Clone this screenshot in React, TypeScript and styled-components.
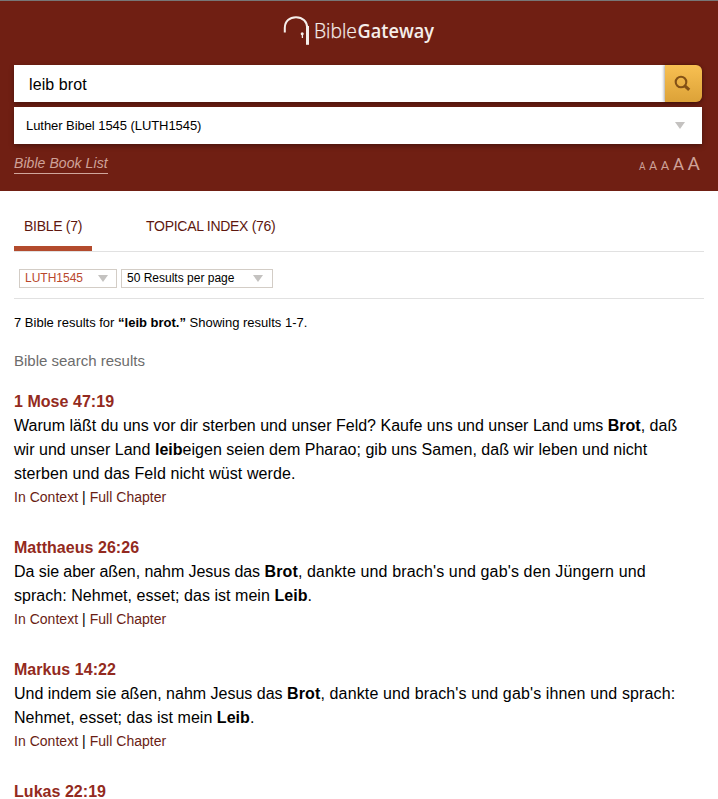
import React from "react";
import styled, { createGlobalStyle } from "styled-components";

const GlobalStyle = createGlobalStyle`
  * { box-sizing: border-box; }
  body {
    margin: 0;
    height: 799px;
    overflow: hidden;
    background: #fff;
    color: #000;
    font-family: "Liberation Sans", Arial, sans-serif;
  }
`;

const Header = styled.header`
  height: 191px;
  padding: 14px 16px 0 14px;
  border-top: 1px solid #777;
  background: #701f13;
`;

const Logo = styled.svg`
  display: block;
  width: 154px;
  height: 32px;
  margin: 0 auto 18px 269px;
  overflow: visible;
`;

const SearchBar = styled.form`
  display: flex;
  height: 37px;
  margin: 0 0 5px;
  box-shadow: 0 2px 5px rgba(0, 0, 0, 0.35);
  border-radius: 0 6px 6px 0;
`;

const SearchField = styled.div`
  flex: 1;
  padding: 1px 0 0 15px;
  background: #fff;
  font-size: 16px;
  letter-spacing: 0.1px;
  line-height: 37px;
`;

const SearchButton = styled.button`
  display: flex;
  align-items: center;
  justify-content: center;
  width: 37px;
  padding: 0 2px 1px 0;
  border: 0;
  border-radius: 0 6px 6px 0;
  background: linear-gradient(#f8c052, #dca238);
  box-shadow: -1px 0 3px rgba(0, 0, 0, 0.35);
`;

const VersionSelect = styled.div`
  display: flex;
  align-items: center;
  justify-content: space-between;
  height: 37px;
  padding: 0 17px 0 12px;
  background: #fff;
  box-shadow: 0 2px 5px rgba(0, 0, 0, 0.35);
  font-size: 13px;
  letter-spacing: -0.06px;
`;

const Arrow = styled.span`
  width: 0;
  height: 0;
  border: 5.5px solid transparent;
  border-top: 7px solid #c4c2c0;
  border-bottom: 0;
`;

const HeaderTools = styled.div`
  display: flex;
  justify-content: space-between;
  align-items: flex-start;
  padding: 10px 2px 0 0;
  color: #cfa299;
`;

const BookList = styled.a`
  height: 20px;
  border-bottom: 1px solid #d0a69c;
  font-size: 14px;
  font-style: italic;
  letter-spacing: 0.07px;
  line-height: 19px;
`;

const FontSizes = styled.div`
  display: flex;
  align-items: baseline;
  gap: 3.6px;
  font-family: Roboto, sans-serif;
  line-height: 20px;
`;

const SizeLetter = styled.span<{ $size: number }>`
  font-size: ${(p) => p.$size}px;
`;

const Content = styled.main`
  padding: 0 14px;
`;

const Tabs = styled.nav`
  display: flex;
  gap: 44px;
  height: 61px;
  padding-top: 15px;
  border-bottom: 1px solid #e1e1e1;
`;

const Tab = styled.a<{ $active?: boolean }>`
  height: 45px;
  padding: 0 10px;
  border-bottom: 5px solid ${(p) => (p.$active ? "#b34b2d" : "transparent")};
  color: #5e170e;
  font-size: 14px;
  letter-spacing: -0.29px;
  line-height: 40px;
  white-space: nowrap;
`;

const Filters = styled.div`
  display: flex;
  gap: 4px;
  height: 47px;
  padding: 17px 5px 0;
  border-bottom: 1px solid #e1e1e1;
`;

const Filter = styled.div<{ $width: number; $accent?: boolean }>`
  display: flex;
  align-items: center;
  justify-content: space-between;
  width: ${(p) => p.$width}px;
  height: 19px;
  padding: 0 ${(p) => (p.$accent ? 8.5 : 9.5)}px 0 5px;
  border: 1px solid #d3cdc6;
  color: ${(p) => (p.$accent ? "#b9472c" : "#000")};
  font-size: 12px;
  line-height: 17px;
`;

const Summary = styled.p`
  margin: 14px 0 0;
  font-size: 13px;
  line-height: 20px;
`;

const Heading = styled.h2`
  margin: 18px 0 19px;
  color: #6c6c6c;
  font-size: 15px;
  font-weight: 400;
  line-height: 20px;
`;

const Result = styled.article`
  margin-bottom: 26px;
`;

const Reference = styled.h3`
  margin: 0;
  color: #932a20;
  font-size: 16px;
  letter-spacing: 0.04px;
  line-height: 24px;
`;

const Verse = styled.p`
  margin: 0;
  font-size: 16px;
  line-height: 24px;
  white-space: nowrap;
`;

const VerseLine = styled.span<{ $spacing: number }>`
  display: block;
  letter-spacing: ${(p) => p.$spacing}px;
`;

const Tracked = styled.span<{ $spacing: number }>`
  letter-spacing: ${(p) => p.$spacing}px;
`;

const Links = styled.div`
  padding-bottom: 2px;
  font-size: 14px;
  letter-spacing: 0.03px;
  line-height: 22px;
`;

const ResultLink = styled.a`
  color: #6a1d14;
`;

type Line = { text: React.ReactNode; spacing: number };
type ResultData = { reference: string; lines: Line[] };

const results: ResultData[] = [
  {
    reference: "1 Mose 47:19",
    lines: [
      { spacing: 0.014, text: <>Warum läßt du uns vor dir sterben und unser Feld? Kaufe uns und unser Land ums <b>Brot</b>, daß</> },
      { spacing: 0.02, text: <>wir und unser Land <b>leib</b>eigen seien dem Pharao; gib uns Samen, daß wir leben und nicht</> },
      { spacing: 0.08, text: <>sterben und das Feld nicht wüst werde.</> },
    ],
  },
  {
    reference: "Matthaeus 26:26",
    lines: [
      { spacing: -0.065, text: <>Da sie aber aßen, nahm Jesus das <Tracked $spacing={0.14}><b>Brot</b>, dankte und brach's und gab's den Jüngern und</Tracked></> },
      { spacing: 0.045, text: <>sprach: Nehmet, esset; das ist mein <b>Leib</b>.</> },
    ],
  },
  {
    reference: "Markus 14:22",
    lines: [
      { spacing: 0, text: <>Und indem sie aßen, nahm Jesus das <Tracked $spacing={0.13}><b>Brot</b>, dankte und brach's und gab's ihnen und sprach:</Tracked></> },
      { spacing: 0.035, text: <>Nehmet, esset; das ist mein <b>Leib</b>.</> },
    ],
  },
  { reference: "Lukas 22:19", lines: [] },
];

export default function App() {
  return (
    <>
      <GlobalStyle />
      <Header>
        <Logo viewBox="0 0 154 32" aria-label="BibleGateway">
          <path d="M1.800 17.500V13C1.800 6 6.700 2.200 13 2.200c6.700 0 11.300 4.500 11.300 11" fill="none" stroke="#f5eeea" strokeWidth="2" />
          <path d="M24.500 11V29.800" stroke="#f5eeea" strokeWidth="3" />
          <circle cx="19.200" cy="18.800" r="1.500" fill="#f5eeea" />
          <path d="M19.400 19v4" stroke="#f5eeea" strokeWidth="1.300" />
          <text x="31" y="23.300" fill="#f5eeea" stroke="#f5eeea" strokeWidth="0.250" fontFamily="Open Sans, sans-serif" fontSize="19.500" fontWeight="300" textLength="43" lengthAdjust="spacingAndGlyphs">Bible</text>
          <text x="74.500" y="23.300" fill="#f5eeea" fontFamily="Open Sans, sans-serif" fontSize="19.500" fontWeight="600" textLength="76.500" lengthAdjust="spacingAndGlyphs">Gateway</text>
        </Logo>
        <SearchBar>
          <SearchField>leib brot</SearchField>
          <SearchButton type="button" aria-label="Search">
            <svg width="17" height="17" viewBox="0 0 17 17" fill="none" stroke="#835116">
              <circle cx="7" cy="7" r="5.300" strokeWidth="2.100" />
              <path d="M10.600 10.600l4.600 4.200" strokeWidth="3.100" />
            </svg>
          </SearchButton>
        </SearchBar>
        <VersionSelect>
          Luther Bibel 1545 (LUTH1545)
          <Arrow />
        </VersionSelect>
        <HeaderTools>
          <BookList>Bible Book List</BookList>
          <FontSizes>
            {[10, 12.5, 13, 17, 19].map((size) => (
              <SizeLetter key={size} $size={size}>A</SizeLetter>
            ))}
          </FontSizes>
        </HeaderTools>
      </Header>
      <Content>
        <Tabs>
          <Tab $active>BIBLE (7)</Tab>
          <Tab>TOPICAL INDEX (76)</Tab>
        </Tabs>
        <Filters>
          <Filter $width={98} $accent>LUTH1545<Arrow /></Filter>
          <Filter $width={152}>50 Results per page<Arrow /></Filter>
        </Filters>
        <Summary>7 Bible results for <b>“leib brot.”</b> Showing results 1-7.</Summary>
        <Heading>Bible search results</Heading>
        {results.map((result) => (
          <Result key={result.reference}>
            <Reference>{result.reference}</Reference>
            {result.lines.length > 0 && (
              <>
                <Verse>
                  {result.lines.map((line, i) => (
                    <VerseLine key={i} $spacing={line.spacing}>{line.text}</VerseLine>
                  ))}
                </Verse>
                <Links>
                  <ResultLink>In Context</ResultLink> | <ResultLink>Full Chapter</ResultLink>
                </Links>
              </>
            )}
          </Result>
        ))}
      </Content>
    </>
  );
}
